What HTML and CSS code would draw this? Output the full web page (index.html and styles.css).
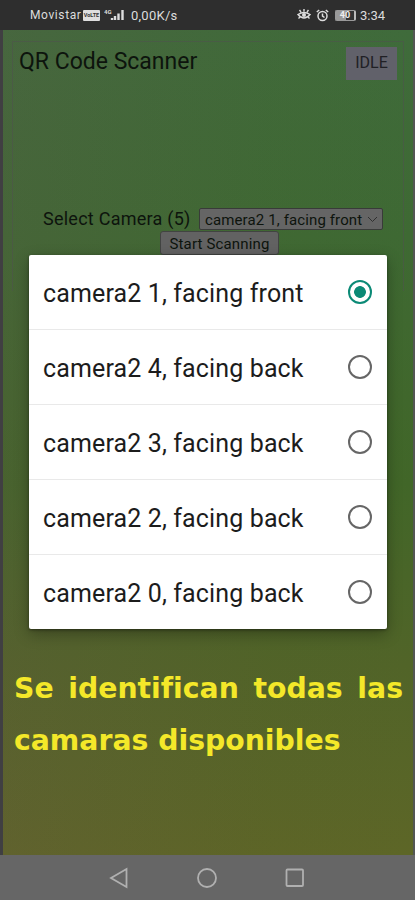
FILE: index.html
```html
<!DOCTYPE html>
<html lang="es">
<head>
<meta charset="utf-8">
<title>QR Code Scanner</title>
<link rel="stylesheet" href="styles.css">
</head>
<body>
<div class="phone">
  <header class="status">
    <span class="carrier">Movistar</span>
    <span class="volte">VoLTE</span>
    <svg class="signal" width="21" height="13" viewBox="0 0 21 13"><text x="0" y="5">4G</text><path d="M8 9v2M11 7v4M14.500 4.500v6.500M18.500 1v10" stroke="#ddd" stroke-width="2.400"/></svg>
    <span class="speed">0,00K/s</span>
    <span class="spacer"></span>
    <svg class="eye" width="14" height="12" viewBox="0 0 14 12" fill="none" stroke="#ddd" stroke-width="1.400"><path d="M1 5.500q6-4 12 0q-6 7-12 0zM4 3L2.500 1M7 2.500V0M10 3l1.500-2M3 8l-1.500 1.500M11 8l1.500 1.500"/><circle cx="7" cy="6" r="1.300" fill="#ddd"/></svg>
    <svg class="alarm" width="13" height="13" viewBox="0 0 13 13" fill="none" stroke="#ddd" stroke-width="1.500"><circle cx="6.500" cy="7" r="4.500"/><path d="M.8 3L3.200 1M12.200 3L9.800 1M6.500 4.500V7l2 1.500"/></svg>
    <span class="battery"><span class="level">40</span></span>
    <span class="clock">3:34</span>
  </header>
  <main class="page">
    <section class="scanner">
      <div class="head"><h1>QR Code Scanner</h1><span class="state">IDLE</span></div>
      <div class="select-row">
        <span class="label">Select Camera (5)</span>
        <span class="select"><span>camera2 1, facing front</span><svg width="11" height="7" viewBox="0 0 11 7"><path d="M1 1l4.500 4.500L10 1" fill="none" stroke="#303030"/></svg></span>
      </div>
      <div class="start">Start Scanning</div>
    </section>
    <p class="caption">Se identifican todas las camaras disponibles</p>
  </main>
  <nav class="nav">
    <svg width="20" height="22" viewBox="0 0 20 22"><path d="M17.500 2v18L2 11z"/></svg>
    <svg width="20" height="22" viewBox="0 0 20 22"><circle cx="10" cy="11" r="9"/></svg>
    <svg width="20" height="22" viewBox="0 0 20 22"><rect x="1.500" y="2.500" width="16.500" height="16.500" rx="1"/></svg>
  </nav>
  <ul class="dialog">
    <li><span>camera2 1, facing front</span><i class="radio on"></i></li>
    <li><span>camera2 4, facing back</span><i class="radio"></i></li>
    <li><span>camera2 3, facing back</span><i class="radio"></i></li>
    <li><span>camera2 2, facing back</span><i class="radio"></i></li>
    <li><span>camera2 0, facing back</span><i class="radio"></i></li>
  </ul>
</div>
</body>
</html>
```
FILE: styles.css
```css
* { box-sizing: border-box; }
body { margin: 0; font-family: Roboto, sans-serif; }
svg { display: block; flex: none; }
.phone { position: relative; width: 415px; height: 900px; display: flex; flex-direction: column; overflow: hidden; }
.status { height: 30px; flex: none; background: #2e2e2e; color: #dcdcdc; display: flex; align-items: center; padding: 0 29px 0 30px; font-size: 12px; white-space: nowrap; }
.carrier { width: 53px; letter-spacing: .6px; }
.volte { width: 17px; height: 11px; background: #dedede; color: #333; border-radius: 1px; font-size: 5.5px; font-weight: 700; line-height: 11px; text-align: center; }
.signal { margin-left: 4px; }
.signal text { font: 700 6px Roboto, sans-serif; fill: #ddd; }
.speed { margin-left: 6px; font-size: 13px; letter-spacing: .25px; }
.spacer { flex: 1; }
.eye { margin-right: 1px; }
.alarm { margin-left: 4px; }
.battery { width: 21px; height: 11px; margin-left: 6px; border: 1px solid #999; border-right: 2px solid #bbb; border-radius: 2px; background: linear-gradient(90deg, #999 55%, #333 55%); }
.level { display: block; font-size: 9px; line-height: 9px; font-weight: 700; text-align: center; color: #eee; }
.clock { margin-left: 4px; width: 26px; font-size: 13px; }
.page { height: 825px; flex: none; border-left: 3px solid #403f42; border-right: 2px solid #535653; padding: 11px 9px 0 9px; background: linear-gradient(90deg, rgba(112, 78, 82, .16), rgba(90, 80, 45, .05) 65%, transparent), linear-gradient(180deg, #3f6b3b 0%, #3e6933 25%, #416628 55%, #516428 77%, #5d6627 100%); }
.scanner { height: 250px; border: 1px solid rgba(80, 80, 80, .5); border-bottom: 0; color: #0d140d; }
.head { display: flex; justify-content: space-between; padding: 5px 6px 0 6px; }
h1 { margin: 0; font-size: 23px; line-height: 29px; font-weight: 400; letter-spacing: 0; white-space: nowrap; }
.state { width: 51px; height: 33px; background: #61616a; color: #202025; font-size: 16px; line-height: 32px; text-align: center; }
.select-row { display: flex; margin: 128px 0 0 30px; height: 23px; white-space: nowrap; }
.label { width: 156px; font-size: 18px; line-height: 21px; letter-spacing: .25px; }
.select { width: 184px; height: 22px; border: 1px solid #393b39; border-radius: 2px; background: #656565; display: flex; align-items: center; justify-content: space-between; padding: 1px 4px 0 5px; font-size: 15px; letter-spacing: .12px; }
.start { width: 119px; height: 24px; margin-left: 147px; border: 1px solid #424442; border-radius: 3px; background: #626262; font-size: 15px; line-height: 24px; letter-spacing: .15px; text-align: center; white-space: nowrap; }
.caption { margin: 372px 0 0 2px; width: 389px; font: 700 28.300px/52px "DejaVu Sans", sans-serif; color: #f4e829; text-align: justify; }
.nav { height: 45px; flex: none; background: #666; display: flex; justify-content: center; align-items: center; gap: 68px; padding-top: 1px; }
.nav svg { fill: none; stroke: #b0b0b0; stroke-width: 1.800; }
.nav svg:first-child { margin-left: -1px; }
.dialog { position: absolute; left: 29px; top: 255px; width: 358px; height: 374px; margin: 0; padding: 0; list-style: none; background: #fff; border-radius: 2px; box-shadow: 0 5px 15px rgba(0, 0, 0, .3), 0 1px 3px rgba(0, 0, 0, .4); }
.dialog li { height: 75px; display: flex; align-items: center; justify-content: space-between; padding: 0 15px 1px 14px; border-bottom: 1px solid #e9e9e9; font-size: 25px; letter-spacing: .13px; color: #1c1c1c; white-space: nowrap; }
.dialog li span { padding-top: 3px; }
.dialog li:last-child { border: 0; }
.radio { width: 24px; height: 24px; border: 2px solid #666; border-radius: 50%; flex: none; }
.on { border: 2.500px solid #0b8a76; background: radial-gradient(circle, #0b8a76 5.500px, #fff 6.200px); }
```
